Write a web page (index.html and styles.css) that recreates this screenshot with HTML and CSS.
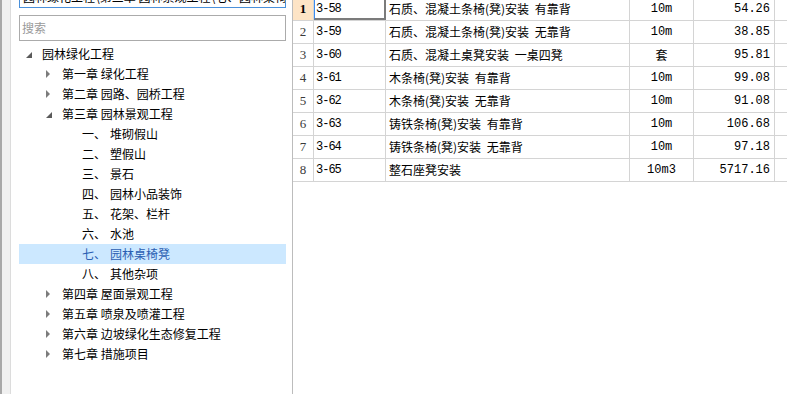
FILE: index.html
```html
<!DOCTYPE html>
<html lang="zh">
<head>
<meta charset="utf-8">
<link rel="stylesheet" href="styles.css">
</head>
<body>
<div class="app">
  <div class="strip"></div>
  <div class="left">
    <div class="path">园林绿化工程\第三章 园林景观工程\七、园林桌椅凳(</div>
    <div class="search">搜索</div>
    <ul class="tree">
      <li class="node l0"><span class="tri open"></span>园林绿化工程</li>
      <li class="node l1"><span class="tri closed"></span>第一章 绿化工程</li>
      <li class="node l1"><span class="tri closed"></span>第二章 园路、园桥工程</li>
      <li class="node l1"><span class="tri open"></span>第三章 园林景观工程</li>
      <li class="node l2"><span class="num">一、</span>堆砌假山</li>
      <li class="node l2"><span class="num">二、</span>塑假山</li>
      <li class="node l2"><span class="num">三、</span>景石</li>
      <li class="node l2"><span class="num">四、</span>园林小品装饰</li>
      <li class="node l2"><span class="num">五、</span>花架、栏杆</li>
      <li class="node l2"><span class="num">六、</span>水池</li>
      <li class="node l2 sel"><span class="num">七、</span>园林桌椅凳</li>
      <li class="node l2"><span class="num">八、</span>其他杂项</li>
      <li class="node l1"><span class="tri closed"></span>第四章 屋面景观工程</li>
      <li class="node l1"><span class="tri closed"></span>第五章 喷泉及喷灌工程</li>
      <li class="node l1"><span class="tri closed"></span>第六章 边坡绿化生态修复工程</li>
      <li class="node l1"><span class="tri closed"></span>第七章 措施项目</li>
    </ul>
  </div>
  <div class="right">
    <div class="grid">
      <div class="row active">
        <div class="c hdr">1</div><div class="c code focus">3-58</div><div class="c name">石质、混凝土条椅(凳)安装 有靠背</div><div class="c unit">10m</div><div class="c price">54.26</div><div class="c fill"></div>
      </div>
      <div class="row">
        <div class="c hdr">2</div><div class="c code">3-59</div><div class="c name">石质、混凝土条椅(凳)安装 无靠背</div><div class="c unit">10m</div><div class="c price">38.85</div><div class="c fill"></div>
      </div>
      <div class="row">
        <div class="c hdr">3</div><div class="c code">3-60</div><div class="c name">石质、混凝土桌凳安装 一桌四凳</div><div class="c unit cjk">套</div><div class="c price">95.81</div><div class="c fill"></div>
      </div>
      <div class="row">
        <div class="c hdr">4</div><div class="c code">3-61</div><div class="c name">木条椅(凳)安装 有靠背</div><div class="c unit">10m</div><div class="c price">99.08</div><div class="c fill"></div>
      </div>
      <div class="row">
        <div class="c hdr">5</div><div class="c code">3-62</div><div class="c name">木条椅(凳)安装 无靠背</div><div class="c unit">10m</div><div class="c price">91.08</div><div class="c fill"></div>
      </div>
      <div class="row">
        <div class="c hdr">6</div><div class="c code">3-63</div><div class="c name">铸铁条椅(凳)安装 有靠背</div><div class="c unit">10m</div><div class="c price">106.68</div><div class="c fill"></div>
      </div>
      <div class="row">
        <div class="c hdr">7</div><div class="c code">3-64</div><div class="c name">铸铁条椅(凳)安装 无靠背</div><div class="c unit">10m</div><div class="c price">97.18</div><div class="c fill"></div>
      </div>
      <div class="row">
        <div class="c hdr">8</div><div class="c code">3-65</div><div class="c name">整石座凳安装</div><div class="c unit">10m3</div><div class="c price">5717.16</div><div class="c fill"></div>
      </div>
    </div>
  </div>
</div>
</body>
</html>
```

FILE: styles.css
```css
* { box-sizing: border-box; }
html, body { margin: 0; padding: 0; }
body {
  width: 787px;
  height: 394px;
  overflow: hidden;
  background: #fff;
  font-family: "Noto Sans CJK SC", "Noto Sans", sans-serif;
  font-size: 12px;
  color: #000;
}
.app {
  display: flex;
  height: 394px;
}
.strip {
  width: 11px;
  flex: none;
  background: #f0f0f0;
  border-left: 2px solid #a8a8a8;
  border-right: 1px solid #dcdcdc;
}
.left {
  width: 281px;
  flex: none;
  padding: 0 6px 0 8px;
  background: #fff;
}
.path {
  height: 20px;
  margin-top: -12px;
  border: 1px solid #4a90da;
  padding: 0 3px;
  line-height: 15px;
  white-space: nowrap;
  overflow: hidden;
}
.search {
  height: 26px;
  margin-top: 7px;
  border: 1px solid #ababab;
  padding: 0 2px;
  line-height: 24px;
  color: #9a9a9a;
}
.tree {
  list-style: none;
  margin: 3px 0 0;
  padding: 0;
}
.node {
  display: flex;
  align-items: center;
  height: 20px;
  line-height: 20px;
  white-space: nowrap;
}
.node.l0 { padding-left: 7px; }
.node.l1 { padding-left: 27px; }
.node.l2 { padding-left: 63px; }
.node.sel { background: #cce8ff; color: #2b5fb3; }
.tri {
  display: inline-block;
  width: 16px;
  height: 20px;
  position: relative;
  flex: none;
}
.tri.closed::before {
  content: "";
  position: absolute;
  left: 0;
  top: 6px;
  border-style: solid;
  border-width: 4px 0 4px 4px;
  border-color: transparent transparent transparent #7c7c7c;
}
.tri.open::before {
  content: "";
  position: absolute;
  left: 0;
  top: 8px;
  border-style: solid;
  border-width: 0 0 6px 6px;
  border-color: transparent transparent #5a5a5a transparent;
}
.num {
  display: inline-block;
  width: 28px;
}
.right {
  flex: 1;
  border-left: 1px solid #bcbcbc;
  overflow: hidden;
}
.grid {
  margin-top: -2px;
}
.row {
  display: grid;
  grid-template-columns: 21px 72px 244px 64px 81px 1fr;
  height: 23px;
  border-bottom: 1px solid #d4d4d4;
}
.c {
  height: 22px;
  line-height: 22px;
  border-right: 1px solid #d4d4d4;
  white-space: nowrap;
  overflow: hidden;
}
.hdr {
  text-align: center;
  font-family: "Liberation Serif", serif;
  font-size: 13px;
  color: #3a3a3a;
  background: #fff;
}
.row.active .hdr {
  background: #fde4c6;
  font-weight: bold;
  color: #000;
}
.code {
  padding-left: 2px;
  font-family: "Liberation Mono", monospace;
  font-size: 12px;
  letter-spacing: -1px;
}
.code.focus {
  border-left: 1px solid #3c8cf0;
  border-right: 2px solid #7b7b7b;
  border-bottom: 2px solid #7b7b7b;
  padding-left: 1px;
}
.name {
  padding-left: 3px;
  font-family: "Noto Sans CJK SC", sans-serif;
  font-size: 12px;
  word-spacing: 3px;
}
.unit {
  text-align: center;
  font-family: "Liberation Mono", monospace;
  font-size: 12px;
}
.unit.cjk { font-family: "Noto Sans CJK SC", sans-serif; }
.price {
  text-align: right;
  padding-right: 4px;
  font-family: "Liberation Mono", monospace;
  font-size: 12px;
}
.fill { border-right: none; }
```
